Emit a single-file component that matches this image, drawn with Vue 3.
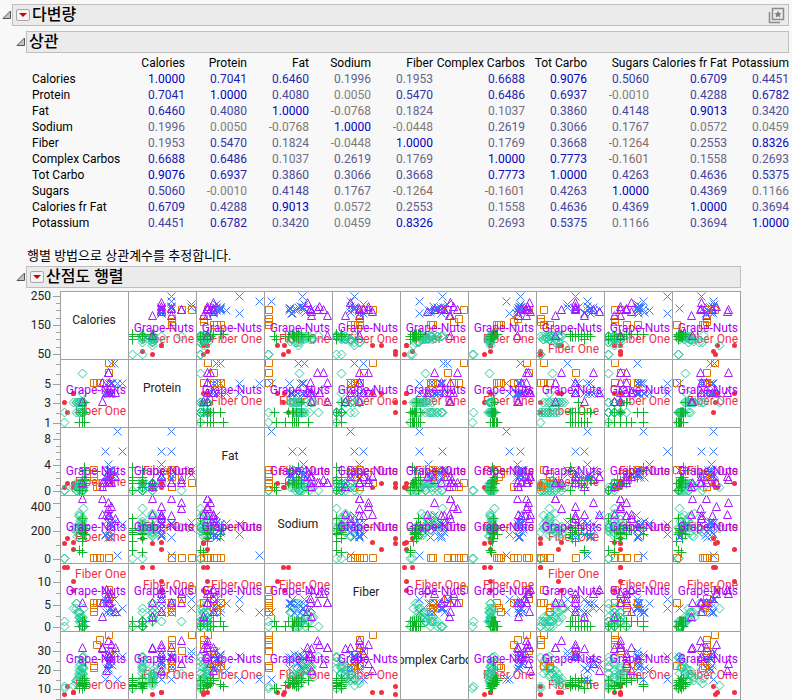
<script setup>
const names = ['Calories', 'Protein', 'Fat', 'Sodium', 'Fiber', 'Complex Carbos', 'Tot Carbo', 'Sugars', 'Calories fr Fat', 'Potassium']

const correlations = [
  ['1.0000', '0.7041', '0.6460', '0.1996', '0.1953', '0.6688', '0.9076', '0.5060', '0.6709', '0.4451'],
  ['0.7041', '1.0000', '0.4080', '0.0050', '0.5470', '0.6486', '0.6937', '-0.0010', '0.4288', '0.6782'],
  ['0.6460', '0.4080', '1.0000', '-0.0768', '0.1824', '0.1037', '0.3860', '0.4148', '0.9013', '0.3420'],
  ['0.1996', '0.0050', '-0.0768', '1.0000', '-0.0448', '0.2619', '0.3066', '0.1767', '0.0572', '0.0459'],
  ['0.1953', '0.5470', '0.1824', '-0.0448', '1.0000', '0.1769', '0.3668', '-0.1264', '0.2553', '0.8326'],
  ['0.6688', '0.6486', '0.1037', '0.2619', '0.1769', '1.0000', '0.7773', '-0.1601', '0.1558', '0.2693'],
  ['0.9076', '0.6937', '0.3860', '0.3066', '0.3668', '0.7773', '1.0000', '0.4263', '0.4636', '0.5375'],
  ['0.5060', '-0.0010', '0.4148', '0.1767', '-0.1264', '-0.1601', '0.4263', '1.0000', '0.4369', '0.1166'],
  ['0.6709', '0.4288', '0.9013', '0.0572', '0.2553', '0.1558', '0.4636', '0.4369', '1.0000', '0.3694'],
  ['0.4451', '0.6782', '0.3420', '0.0459', '0.8326', '0.2693', '0.5375', '0.1166', '0.3694', '1.0000']
]

// Weak values fade to grey; positive ones turn blue, negative ones brown.
function tone(text) {
  const r = Number(text)
  const c = Math.min(1, Math.abs(r) * 1.1)
  const low = Math.round(128 * (1 - c))
  const high = Math.round(128 + 64 * c)
  return r < 0 ? `rgb(${high}, ${low}, ${low})` : `rgb(${low}, ${low}, ${high})`
}

// Plot units per data unit, and the value at the start of each axis.
const scales = [
  [0.2917, 50], [9.8, 1], [6.5, 0], [1, 0], [4.5, 0],
  [1, 0], [1, 0], [2.95, 0], [1, 0], [1, 0]
]

// calories, protein, fat, sodium, fiber, complex, total, sugars, fat calories, potassium
const groups = [
  { kind: 'dot', rows: [
    [60, 2, 1, 20, 13, 8, 18, 0, 12, 37],
    [50, 3, 0.5, 15, 13, 0, 12, 0, 12, 39],
    [80, 4, 1, 9, 10, 2, 18, 6, 12, 58],
    [80, 4, 0.5, 16, 8, 2, 18, 7, 6, 41]
  ] },
  { kind: 'diamond', rows: [
    [50, 1, 0, 0, 0, 6, 0, 0, 0, 2],
    [50, 2, 0, 0, 1, 8, 1, 0, 0, 2],
    [110, 6, 0, 31, 1, 21, 17, 4, 0, 9],
    [80, 3, 0.5, 30, 4, 9, 18, 8, 6, 43],
    [90, 3, 1, 29, 5, 14, 18, 6, 12, 23],
    [90, 3, 0, 27, 5, 11, 18, 5, 0, 26],
    [100, 3, 1, 23, 3, 18, 17, 3, 12, 15],
    [100, 3, 0.5, 42, 3, 20, 18, 3, 6, 13],
    [100, 2, 1, 35, 3, 24, 19, 5, 12, 14],
    [110, 2, 1, 37, 0, 33, 20, 3, 6, 4],
    [110, 2, 0, 41, 1, 28, 19, 3, 0, 5],
    [110, 2, 0.5, 28, 1, 27, 18, 3, 0, 5],
    [115, 2, 0, 50, 0, 38, 22, 3, 6, 3],
    [110, 2, 0, 31, 0, 37, 20, 2, 0, 2],
    [100, 3, 1, 43, 2, 28, 18, 1, 12, 8],
    [100, 2, 0, 30, 1, 21, 16, 1, 0, 3],
    [110, 3, 1, 32, 1, 21, 18, 4, 12, 9],
    [110, 3, 1, 26, 2, 20, 19, 6, 12, 14],
    [100, 3, 0.5, 45, 2, 17, 18, 5, 6, 18],
    [110, 2, 1, 30, 1, 16, 19, 6, 12, 7],
    [110, 2, 0, 34, 1, 33, 20, 1, 0, 7],
    [115, 3, 0.5, 25, 4, 16, 20, 7, 6, 27],
    [90, 2, 0, 31, 4, 14, 17, 5, 0, 12],
    [110, 2, 1, 26, 0, 37, 20, 0, 6, 3],
    [115, 2, 1.5, 29, 0, 26, 21, 4, 18, 5],
    [110, 3, 0, 32, 2, 12, 18, 7, 0, 12],
    [105, 3, 1, 38, 2, 24, 19, 2, 6, 11],
    [105, 2, 0.5, 33, 1, 30, 19, 2, 6, 6],
    [95, 3, 0.5, 22, 3, 14, 17, 6, 6, 17],
    [110, 4, 1, 39, 1, 26, 20, 3, 12, 10]
  ] },
  { kind: 'plus', rows: [
    [100, 1, 0, 8, 0, 6, 18, 15, 0, 2],
    [110, 2, 0.5, 6, 1, 6, 19, 15, 6, 5],
    [110, 1, 1, 17, 0, 9, 20, 12, 6, 0],
    [120, 1, 1, 24, 0, 12, 22, 13, 12, 2],
    [110, 1, 1, 26, 1, 10, 20, 11, 12, 3],
    [120, 1, 2, 28, 1, 14, 22, 12, 23, 4],
    [120, 1, 1.5, 30, 0, 16, 24, 14, 18, 5],
    [110, 1, 0, 40, 0, 14, 21, 10, 0, 2],
    [120, 1, 3.5, 30, 0, 8, 20, 10, 35, 7],
    [120, 2, 3, 24, 1, 10, 22, 10, 35, 9],
    [110, 2, 1, 20, 1, 12, 21, 11, 12, 6],
    [120, 2, 2, 33, 1, 16, 23, 12, 29, 7],
    [110, 2, 1, 28, 1, 8, 19, 13, 6, 4],
    [110, 1, 1, 30, 1, 12, 20, 14, 12, 3],
    [120, 3, 1, 33, 1, 12, 22, 13, 18, 9],
    [120, 1, 2, 24, 0, 14, 25, 16, 18, 5],
    [110, 2, 1.5, 25, 0, 11, 20, 17, 12, 6]
  ] },
  { kind: 'cross', rows: [
    [230, 5, 9, 3, 3, 15, 34, 16, 35, 37],
    [250, 5, 6, 34, 4, 38, 48, 12, 59, 25],
    [190, 4, 6, 24, 6, 15, 37, 15, 59, 37],
    [200, 4, 4, 35, 5, 24, 45, 16, 41, 35],
    [211, 7, 3, 30, 4, 39, 48, 9, 29, 34],
    [222, 7, 2.5, 36, 6, 43, 48, 9, 29, 38],
    [208, 5, 3, 21, 4, 37, 46, 12, 29, 3],
    [215, 5, 2, 32, 3, 29, 47, 16, 32, 36],
    [200, 5, 2.5, 21, 5, 26, 47, 17, 30, 31],
    [205, 4, 3, 26, 3, 40, 50, 12, 35, 36],
    [190, 4, 2, 23, 5, 37, 44, 17, 30, 29],
    [210, 4, 3, 34, 4, 33, 49, 18, 30, 32],
    [195, 4, 2, 37, 3, 26, 46, 15, 36, 34],
    [205, 4, 2.5, 43, 4, 30, 49, 20, 28, 26],
    [200, 4, 3, 29, 5, 31, 51, 18, 29, 32],
    [212, 5, 2.5, 35, 4, 36, 48, 13, 33, 34],
    [206, 4, 2.5, 22, 5, 34, 47, 17, 31, 35]
  ] },
  { kind: 'square', rows: [
    [200, 7, 1, 0, 8, 59, 54, 1, 6, 38],
    [200, 6, 2, 0, 6, 43, 56, 12, 12, 30],
    [160, 5, 0.5, 0, 5, 49, 41, 0, 6, 30],
    [170, 5, 0.5, 0, 5, 54, 45, 0, 6, 30],
    [150, 5, 3, 0, 5, 28, 24, 1, 29, 0],
    [150, 5, 2.5, 0, 3, 26, 28, 3, 18, 26],
    [150, 5, 2, 0, 4, 28, 26, 3, 18, 28]
  ] },
  { kind: 'triangle', rows: [
    [110, 3, 1, 59, 5, 46, 45, 5, 12, 16],
    [180, 5, 1, 59, 5, 46, 54, 5, 12, 30],
    [200, 6, 1.5, 55, 7, 30, 56, 18, 18, 52],
    [200, 6, 1, 49, 5, 53, 54, 7, 12, 24],
    [210, 4, 1, 51, 7, 49, 55, 12, 12, 40],
    [180, 3, 0.5, 43, 2, 45, 46, 15, 6, 15],
    [205, 5, 1, 42, 5, 37, 49, 12, 18, 25],
    [225, 4, 2, 39, 3, 46, 57, 12, 23, 25],
    [195, 4, 2, 43, 8, 23, 58, 20, 23, 51],
    [200, 4, 2, 42, 6, 40, 53, 12, 18, 36]
  ] }
]

const shapes = {
  dot: 'M-2.5 0a2.5 2.5 0 1 0 5 0a2.5 2.5 0 1 0 -5 0Z',
  diamond: 'M0 -4.5L4.5 0L0 4.5L-4.5 0Z',
  plus: 'M-5 0H5M0 -5V5',
  cross: 'M-4 -4L4 4M-4 4L4 -4',
  square: 'M-3 -4H4V3H-3Z',
  triangle: 'M0 -5L4 3H-4Z'
}

// Axis ticks of each row, and the baselines of the two point labels inside a cell.
const plotRows = [
  { ticks: [[0, '50'], [7], [15], [22], [29, '150'], [36], [44], [51], [58, '250']], grape: 40, fiber: 51, fiberLow: 61 },
  { ticks: [[0, '1'], [10], [20, '3'], [29], [39, '5'], [49], [59]], grape: 34, fiber: 45, fiberLow: 55 },
  { ticks: [[0, '0'], [6], [13], [19], [26, '4'], [32], [39], [45], [52, '8'], [58]], grape: 47, fiber: 47, fiberLow: 58 },
  { ticks: [[0, '0'], [14], [28, '200'], [42], [56, '400', 4]], grape: 35, fiber: 35, fiberLow: 45 },
  { ticks: [[0, '0'], [11], [22, '5'], [34], [45, '10'], [56]], grape: 31, fiber: 25, fiberLow: 14 },
  { ticks: [[-4], [6, '10'], [15], [25, '20'], [34], [44, '30'], [53]], grape: 31, fiber: 47, fiberLow: 57 }
]

const u = (row, v) => Math.round((row[v] - scales[v][1]) * scales[v][0])

function layer(kind, x, y) {
  const group = groups.find((g) => g.kind === kind)
  return group.rows.map((row) => `translate(${3.5 + u(row, x)} ${62.5 - u(row, y)})`)
}

const under = ['dot']
const over = ['diamond', 'plus', 'cross', 'square', 'triangle']
const isLow = (col) => col === 0 || col === 7
</script>

<template>
  <main class="report">
    <section>
      <header class="head">
        <button class="fold" aria-label="다변량 접기">
          <svg width="10" height="10" viewBox="0 0 10 10"><path d="M8.500 1V8.500H1Z" /></svg>
        </button>
        <div class="bar">
          <button class="menu" aria-label="다변량 메뉴">
            <svg width="8" height="4" viewBox="0 0 8 4"><path d="M0 0H8L4 4Z" /></svg>
          </button>
          <h1>다변량</h1>
          <button class="star" aria-label="즐겨찾기">
            <svg width="17" height="17" viewBox="0 0 17 17">
              <path class="frame" d="M1.500 5V15.500H12M4.500 1.500H15.500V12.500H4.500Z" />
              <path class="glyph" d="M10 3.500L11.100 5.900L13.600 6.200L11.800 7.900L12.300 10.400L10 9.200L7.700 10.400L8.200 7.900L6.400 6.200L8.900 5.900Z" />
            </svg>
          </button>
        </div>
      </header>

      <section class="nested">
        <header class="head">
          <button class="fold" aria-label="상관 접기">
            <svg width="10" height="10" viewBox="0 0 10 10"><path d="M8.500 1V8.500H1Z" /></svg>
          </button>
          <div class="bar"><h2>상관</h2></div>
        </header>
        <table class="matrix">
          <colgroup>
            <col class="c-name">
            <col v-for="n in names" :key="n" :class="{ 'c-wide': n === 'Complex Carbos', 'c-mid': n === 'Calories fr Fat' }">
          </colgroup>
          <thead>
            <tr>
              <td></td>
              <th v-for="n in names" :key="n" scope="col">{{ n }}</th>
            </tr>
          </thead>
          <tbody>
            <tr v-for="(row, i) in correlations" :key="i">
              <th scope="row">{{ names[i] }}</th>
              <td v-for="(v, j) in row" :key="j" :style="{ color: tone(v) }">{{ v }}</td>
            </tr>
          </tbody>
        </table>
        <p class="note">행별 방법으로 상관계수를 추정합니다.</p>
      </section>

      <section class="nested scatter">
        <header class="head">
          <button class="fold" aria-label="산점도 행렬 접기">
            <svg width="10" height="10" viewBox="0 0 10 10"><path d="M8.500 1V8.500H1Z" /></svg>
          </button>
          <div class="bar">
            <button class="menu" aria-label="산점도 행렬 메뉴">
              <svg width="8" height="4" viewBox="0 0 8 4"><path d="M0 0H8L4 4Z" /></svg>
            </button>
            <h2>산점도 행렬</h2>
          </div>
        </header>
        <div class="plots">
          <div v-for="(r, y) in plotRows" :key="y" class="plot-row">
            <svg class="axis" width="46" height="68" viewBox="0 0 46 68">
              <g v-for="(t, k) in r.ticks" :key="k">
                <path :d="`M${t[1] ? 39 : 42} ${63.5 - t[0]}H46`" />
                <text v-if="t[1]" x="37" :y="67 - t[0] + (t[2] || 0)">{{ t[1] }}</text>
              </g>
            </svg>
            <div v-for="(n, x) in names" :key="n" class="cell">
              <svg width="67" height="67" viewBox="0 0 67 67">
                <text v-if="x === y" class="name" x="33" y="32">{{ n }}</text>
                <template v-else>
                  <g v-for="kind in under" :key="kind" :class="kind">
                    <path v-for="(t, k) in layer(kind, x, y)" :key="k" :d="shapes[kind]" :transform="t" />
                  </g>
                  <text class="fiber" :x="x === 7 ? 62 : 65" :y="isLow(x) ? r.fiberLow : r.fiber">Fiber One</text>
                  <g v-for="kind in over" :key="kind" :class="kind">
                    <path v-for="(t, k) in layer(kind, x, y)" :key="k" :d="shapes[kind]" :transform="t" />
                  </g>
                  <text class="grape" x="65" :y="r.grape">Grape-Nuts</text>
                </template>
              </svg>
            </div>
          </div>
        </div>
      </section>
    </section>
  </main>
</template>

<style>
body {
  margin: 0;
  background: #f8f8f8;
}
</style>

<style scoped>
.report {
  padding: 4px 3px 0 0;
  font-family: Roboto, "Noto Sans CJK KR", sans-serif;
  font-size: 12px;
  line-height: 16px;
  color: #000;
}
.head {
  display: flex;
  align-items: center;
}
.fold {
  display: flex;
  width: 12px;
  padding: 0 0 0 2px;
  border: 0;
  background: none;
  flex: none;
}
.fold path {
  fill: #c4c4c4;
  stroke: #555;
}
.bar {
  display: flex;
  flex: 1;
  align-items: center;
  box-sizing: border-box;
  height: 22px;
  padding: 0 3px 0 2px;
  border: 1px solid #bebebe;
  background: #ebebeb;
}
h1,
h2 {
  margin: 0;
  font-size: 16px;
  line-height: 20px;
  font-weight: 500;
  white-space: nowrap;
}
.menu {
  display: flex;
  align-items: center;
  justify-content: center;
  width: 14px;
  height: 12px;
  margin: 0 2px 0 1px;
  padding: 0;
  border: 1px solid #a8a8a8;
  border-radius: 2px;
  background: #f4f4f4;
}
.menu path {
  fill: #d00000;
}
.star {
  display: flex;
  margin-left: auto;
  padding: 0;
  border: 0;
  background: none;
}
.frame {
  fill: none;
  stroke: #8c8c8c;
  stroke-width: 1.500;
}
.glyph {
  fill: #808080;
}
.nested {
  padding: 5px 0 0 14px;
}
.matrix {
  table-layout: fixed;
  width: 757px;
  margin: 2px 0 0 18px;
  border-collapse: collapse;
}
.matrix col {
  width: 62px;
}
.matrix .c-name {
  width: 91px;
}
.matrix .c-wide {
  width: 92px;
}
.matrix .c-mid {
  width: 78px;
}
.matrix th,
.matrix td {
  height: 16px;
  padding: 0;
  font-weight: 400;
  text-align: right;
  white-space: nowrap;
}
.matrix tbody th {
  text-align: left;
}
.note {
  margin: 17px 0 0 13px;
  font-size: 13px;
}
.scatter {
  width: fit-content;
  padding-top: 2px;
}
.plots {
  margin: 3px 0 0;
}
.plot-row {
  display: flex;
}
.axis {
  display: block;
  flex: none;
  overflow: visible;
}
.axis path {
  stroke: #a0a0a0;
}
.axis text {
  fill: #222;
  text-anchor: end;
}
.cell {
  box-sizing: border-box;
  flex: none;
  border-right: 1px solid #a0a0a0;
  border-bottom: 1px solid #a0a0a0;
  background: #fff;
}
.axis + .cell {
  border-left: 1px solid #a0a0a0;
}
.plot-row:first-child .cell {
  border-top: 1px solid #a0a0a0;
}
.cell svg {
  display: block;
  overflow: hidden;
}
.cell path {
  fill: none;
}
.cell .dot path {
  fill: #f03040;
}
.diamond {
  stroke: #20cc98;
}
.plus {
  stroke: #10b428;
}
.cross {
  stroke: #4078ff;
}
.square {
  stroke: #e07800;
}
.triangle {
  stroke: #a818ff;
}
.name {
  fill: #222;
  text-anchor: middle;
}
.fiber {
  fill: #f03048;
  text-anchor: end;
}
.grape {
  fill: #b000f8;
  text-anchor: end;
}
</style>
